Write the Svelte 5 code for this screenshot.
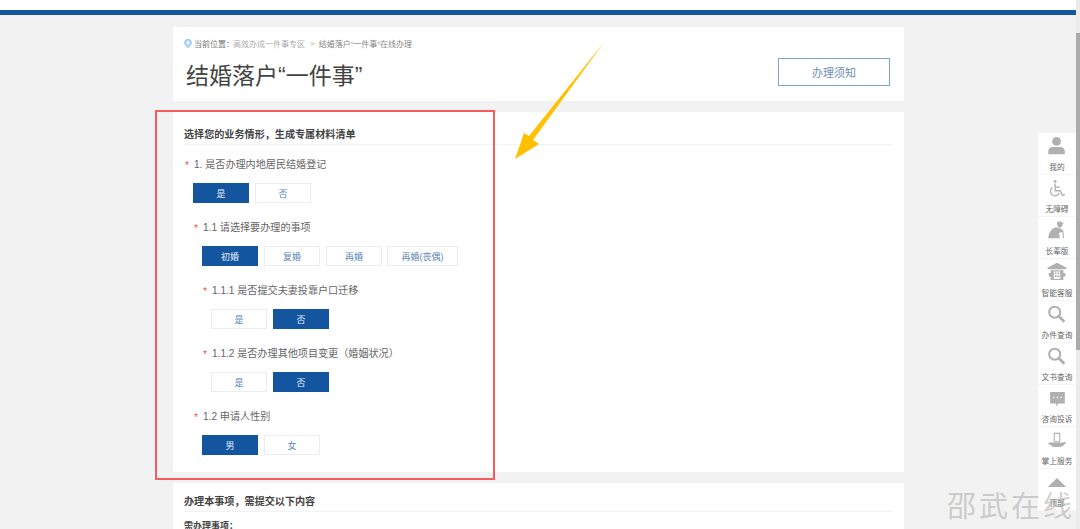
<script lang="ts">
  const questions = [
    { label: '1. 是否办理内地居民结婚登记', level: 0, options: ['是', '否'], picked: 0 },
    { label: '1.1 请选择要办理的事项', level: 1, options: ['初婚', '复婚', '再婚', '再婚(丧偶)'], picked: 0 },
    { label: '1.1.1 是否提交夫妻投靠户口迁移', level: 2, options: ['是', '否'], picked: 1 },
    { label: '1.1.2 是否办理其他项目变更（婚姻状况）', level: 2, options: ['是', '否'], picked: 1 },
    { label: '1.2 申请人性别', level: 1, options: ['男', '女'], picked: 0 }
  ];

  const tools = ['我的', '无障碍', '长辈版', '智能客服', '办件查询', '文书查询', '咨询投诉', '掌上服务', '顶部'];
</script>

<div class="page">
  <div class="topbar"></div>

  <main class="content">
    <section class="card head">
      <div class="crumbs">
        <svg class="pin" viewBox="0 0 10 12" width="8" height="9" aria-hidden="true">
          <path d="M5 .5a4.500 4.500 0 0 1 4.500 4.500c0 3-3 5-4.500 6.500C3.500 10 .5 8 .5 5A4.500 4.500 0 0 1 5 .5z" fill="#bcdcf7" stroke="#6db1ec" />
          <circle cx="5" cy="5" r="1.700" fill="#fff" />
        </svg>
        <span class="here">当前位置：</span>
        <span>高效办成一件事专区</span>
        <span class="sep">&gt;</span>
        <span class="cur">结婚落户“一件事”在线办理</span>
      </div>
      <div class="title-row">
        <h1>结婚落户“一件事”</h1>
        <button class="notice">办理须知</button>
      </div>
    </section>

    <section class="card form">
      <h2>选择您的业务情形，生成专属材料清单</h2>
      {#each questions as q}
        <div class="question level-{q.level}">
          <div class="label"><i>*</i>{q.label}</div>
          <div class="options">
            {#each q.options as opt, idx}
              <button class="opt" class:on={idx === q.picked} class:wide={opt.length > 2}>{opt}</button>
            {/each}
          </div>
        </div>
      {/each}
    </section>

    <section class="card list">
      <h2>办理本事项，需提交以下内容</h2>
      <h3>需办理事项：</h3>
    </section>
  </main>

  <aside class="tools">
    {#each tools as tool, n}
      <div class="tool">
        <svg viewBox="0 0 24 24" width="22" height="22" aria-hidden="true">
          {#if n === 0}
            <circle cx="11.500" cy="7" r="4.800" />
            <path d="M2.500 21v-3.500c0-2.800 2.500-4.500 5-4.500h8c2.500 0 5 1.700 5 4.500V21z" />
          {:else if n === 1}
            <g fill="none" stroke-width="1.400">
              <path d="M10 7v8h5.500l2.500 5 2.500-1" />
              <path d="M7 11.500a5 5 0 1 0 7.500 6" />
              <path d="M10 11h5" />
            </g>
            <circle cx="10" cy="4.800" r="1.500" />
          {:else if n === 2}
            <path d="M12 3.500c1-1 5-1 6 .5l1.500 1.500H18c.3 2-1 4-3 4s-3-3-3-6z" />
            <path d="M2.500 21c.3-6 3.500-11 8.500-12l4 1c1.500.4 3 1.500 4 3l.7 8h-1l-.9-6.800-3.500.8.700 6z" />
          {:else if n === 3}
            <path d="M12 2 23 7.500 21 9H3L1 7.500z" />
            <path d="M5 10h14v3h2v4h-2v3.700H5V17H3v-4h2z" />
            <path d="M8.500 11.500h7v8h-7z" fill="#fff" />
            <path d="M9.500 12.500h2v2h-2zM12.500 12.500h2v2h-2zM9.500 15.500h2v2h-2zM12.500 15.500h2v2h-2z" />
          {:else if n === 4 || n === 5}
            <circle cx="9.500" cy="10" r="6" fill="none" stroke-width="2.200" />
            <path d="m14 14.500 6 6" fill="none" stroke-width="3" />
          {:else if n === 6}
            <path d="M4.500 5.500h16V18h-7l-2.500 3v-3H4.500z" />
            <circle cx="8.500" cy="11.500" r=".9" fill="#fff" />
            <circle cx="12.500" cy="11.500" r=".9" fill="#fff" />
            <circle cx="16.500" cy="11.500" r=".9" fill="#fff" />
          {:else if n === 7}
            <path d="M9 4.800h6V14H9z" fill="#fff" stroke-width="1.200" />
            <path d="M2 15.500c2.500-1.500 5-1.300 7-.5h7l6-1c-1 3-3.500 5.500-8 5.500H8z" />
          {:else}
            <path d="M12 7.500 22 17.500H2z" />
          {/if}
        </svg>
        <span>{tool}</span>
      </div>
    {/each}
  </aside>

  <div class="scrollbar"><div class="thumb"></div></div>

  <div class="mark" aria-hidden="true"></div>
  <svg class="arrow" viewBox="0 0 1080 529" width="1080" height="529" aria-hidden="true">
    <polygon points="605,41 533,140 539,144 515,159 524,133 529,136" fill="#ffc000" />
  </svg>
  <div class="watermark">邵武在线</div>
</div>

<style>
  :global(body) {
    margin: 0;
    background: #f2f2f2;
    font-family: 'Liberation Sans', 'Noto Sans CJK SC', sans-serif;
    color: #555;
  }

  .page {
    position: relative;
    width: 1080px;
    height: 529px;
    overflow: hidden;
    background: #f2f2f2;
  }

  .topbar {
    height: 5px;
    border-top: 10px solid #fff;
    background: #14559f;
  }

  .content {
    display: flex;
    flex-direction: column;
    gap: 11px;
    width: 731px;
    margin: 12px 0 0 173px;
  }

  .card {
    background: #fff;
    padding: 0 12px 0 11px;
  }

  .head {
    height: 74px;
    padding-left: 11px;
    padding-right: 14px;
  }

  .crumbs {
    display: flex;
    align-items: center;
    height: 12px;
    margin-top: 10px;
    font-size: 8px;
    color: #aaa;
    white-space: nowrap;
  }

  .pin {
    margin-right: 2px;
  }

  .here {
    color: #777;
    width: 39px;
  }

  .sep {
    margin: 0 4px 0 5px;
  }

  .cur {
    color: #888;
  }

  .title-row {
    display: flex;
    justify-content: space-between;
    align-items: flex-start;
    margin-top: 9px;
    padding-left: 2px;
  }

  h1 {
    margin: 1px 0 0;
    font-size: 23px;
    font-weight: 400;
    line-height: 34px;
    color: #444;
  }

  .notice {
    width: 112px;
    height: 28px;
    padding: 0;
    border: 1px solid #7fa3cb;
    background: #fff;
    color: #6d8fb8;
    font: inherit;
    font-size: 11px;
  }

  .form {
    height: 360px;
    box-sizing: border-box;
    padding-top: 14px;
  }

  h2 {
    margin: 0;
    height: 18px;
    line-height: 17px;
    font-size: 10.100px;
    font-weight: 700;
    color: #444;
    border-bottom: 1px solid #eef3f9;
  }

  .question {
    height: 63px;
    box-sizing: border-box;
    padding-top: 13px;
  }

  .level-1 {
    padding-left: 9px;
  }

  .level-2 {
    padding-left: 18px;
  }

  .label {
    position: relative;
    height: 14px;
    line-height: 14px;
    padding-left: 10px;
    font-size: 10.100px;
    color: #666;
    white-space: nowrap;
  }

  .label i {
    position: absolute;
    left: 1px;
    top: 1px;
    font-style: normal;
    color: #f05a5a;
  }

  .options {
    display: flex;
    gap: 6px;
    margin-top: 11px;
    padding-left: 9px;
  }

  .opt {
    width: 56px;
    height: 20px;
    padding: 0;
    border: 1px solid #e8edf4;
    background: #fff;
    color: #5c86b8;
    font: inherit;
    font-size: 9px;
  }

  .opt.wide {
    width: 71px;
    margin-left: -1px;
  }

  .opt.on {
    background: #14559f;
    border-color: #14559f;
    color: #e6eef7;
  }

  .list {
    padding-top: 10px;
    height: 60px;
  }

  h3 {
    margin: 7px 0 0;
    font-size: 9px;
    line-height: 14px;
    color: #444;
  }

  .tools {
    position: absolute;
    top: 133px;
    left: 1038px;
    width: 38px;
    background: #fff;
  }

  .tool {
    display: flex;
    flex-direction: column;
    align-items: center;
    height: 42px;
    box-sizing: border-box;
    padding-top: 2px;
    border-bottom: 1px solid #f4f4f4;
  }

  .tool svg {
    fill: #b0b0b0;
    stroke: #b0b0b0;
    stroke-width: 0;
  }

  .tool span {
    margin-top: 5px;
    font-size: 7.700px;
    line-height: 12px;
    color: #666;
    white-space: nowrap;
  }

  .scrollbar {
    position: absolute;
    top: 0;
    right: 0;
    width: 4px;
    height: 529px;
    background: #ebebeb;
  }

  .thumb {
    height: 317px;
    margin-top: 33px;
    background: #ababab;
  }

  .mark {
    position: absolute;
    left: 155px;
    top: 110px;
    width: 336px;
    height: 366px;
    border: 2px solid #f95c5c;
  }

  .arrow {
    position: absolute;
    left: 0;
    top: 0;
  }

  .watermark {
    position: absolute;
    left: 947px;
    top: 489px;
    font-size: 29px;
    line-height: 36px;
    letter-spacing: 3px;
    color: rgba(170, 170, 170, 0.55);
    white-space: nowrap;
  }
</style>
